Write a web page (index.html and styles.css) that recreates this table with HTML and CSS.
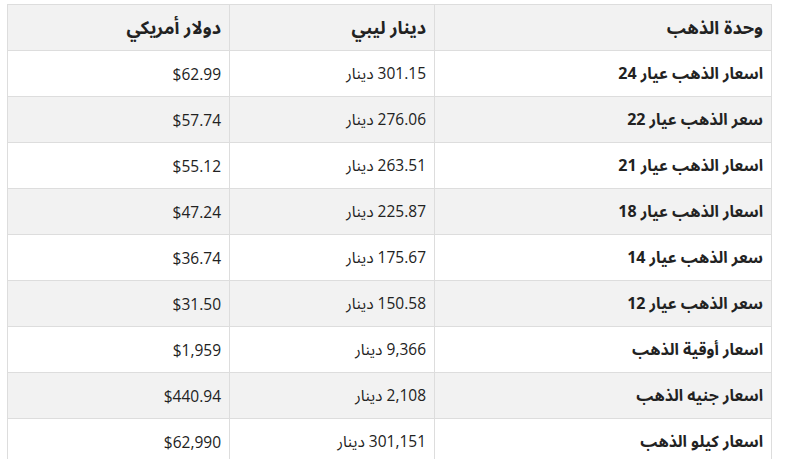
FILE: index.html
```html
<!DOCTYPE html>
<html lang="ar" dir="rtl">
<head>
<meta charset="utf-8">
<link rel="stylesheet" href="styles.css">
</head>
<body>
<div class="wrap">
<table class="prices">
  <colgroup>
    <col class="c-unit">
    <col class="c-lyd">
    <col class="c-usd">
  </colgroup>
  <thead>
    <tr><th>وحدة الذهب</th><th>دينار ليبي</th><th>دولار أمريكي</th></tr>
  </thead>
  <tbody>
    <tr><td class="unit">اسعار الذهب عيار 24</td><td>301.15 دينار</td><td>$62.99</td></tr>
    <tr><td class="unit">سعر الذهب عيار 22</td><td>276.06 دينار</td><td>$57.74</td></tr>
    <tr><td class="unit">اسعار الذهب عيار 21</td><td>263.51 دينار</td><td>$55.12</td></tr>
    <tr><td class="unit">اسعار الذهب عيار 18</td><td>225.87 دينار</td><td>$47.24</td></tr>
    <tr><td class="unit">سعر الذهب عيار 14</td><td>175.67 دينار</td><td>$36.74</td></tr>
    <tr><td class="unit">سعر الذهب عيار 12</td><td>150.58 دينار</td><td>$31.50</td></tr>
    <tr><td class="unit">اسعار أوقية الذهب</td><td>9,366 دينار</td><td>$1,959</td></tr>
    <tr><td class="unit">اسعار جنيه الذهب</td><td>2,108 دينار</td><td>$440.94</td></tr>
    <tr><td class="unit">اسعار كيلو الذهب</td><td>301,151 دينار</td><td>$62,990</td></tr>
  </tbody>
</table>
</div>
</body>
</html>
```
FILE: styles.css
```css
html, body {
  margin: 0;
  padding: 0;
  background: #fff;
}
body {
  font-family: "Open Sans", "Noto Sans Arabic", "Noto Naskh Arabic", "DejaVu Sans", sans-serif;
  color: #222;
}
.wrap {
  padding: 4px 19px 0 8px;
}
.prices {
  width: 764px;
  table-layout: fixed;
  border-collapse: collapse;
  font-size: 15.5px;
}
.c-unit { width: 337px; }
.c-lyd { width: 205px; }
.c-usd { width: 222px; }
.prices th,
.prices td {
  border: 1px solid #dddddd;
  height: 46px;
  padding: 0 8px;
  text-align: right;
  vertical-align: middle;
  box-sizing: border-box;
}
.prices th {
  font-weight: 700;
  font-size: 18px;
  background: #f2f2f2;
}
.prices td.unit {
  font-weight: 700;
  font-size: 16px;
}
.prices tbody tr:nth-child(even) td {
  background: #f2f2f2;
}
```
